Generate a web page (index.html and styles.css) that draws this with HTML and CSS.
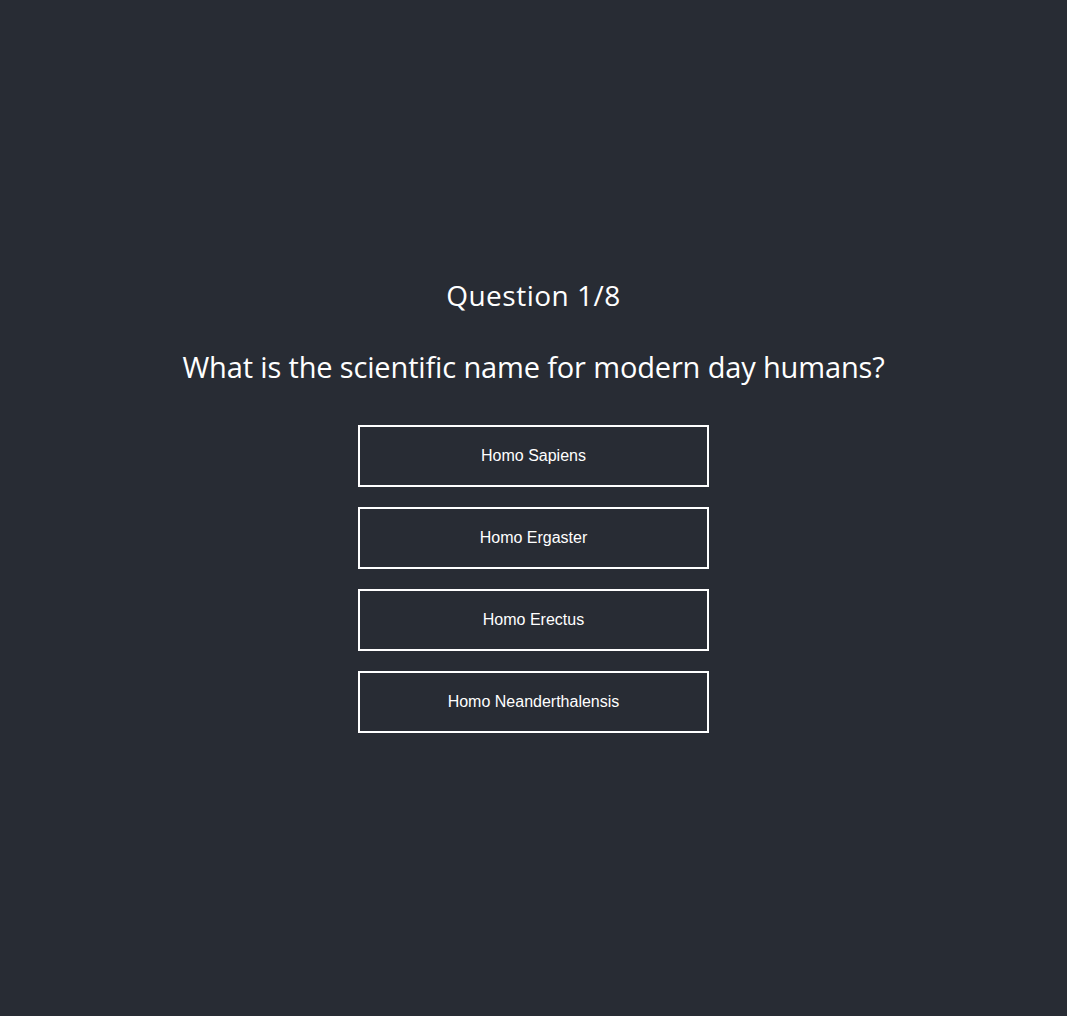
FILE: index.html
```html
<!DOCTYPE html>
<html lang="en">
<head>
<meta charset="utf-8">
<title>Quiz</title>
<link rel="stylesheet" href="styles.css">
</head>
<body>
<main class="app">
  <div class="quiz">
    <h2 class="count">Question 1/8</h2>
    <p class="question">What is the scientific name for modern day humans?</p>
    <div class="answers">
      <button class="answer">Homo Sapiens</button>
      <button class="answer">Homo Ergaster</button>
      <button class="answer">Homo Erectus</button>
      <button class="answer">Homo Neanderthalensis</button>
    </div>
  </div>
</main>
</body>
</html>
```
FILE: styles.css
```css
html, body {
  margin: 0;
  padding: 0;
  background: #282c34;
}
.app {
  box-sizing: border-box;
  min-height: 100vh;
  padding-bottom: 6px;
  display: flex;
  flex-direction: column;
  justify-content: center;
  align-items: center;
  color: #ffffff;
  font-family: "Open Sans", "Noto Sans", sans-serif;
}
.quiz {
  display: flex;
  flex-direction: column;
  align-items: center;
}
.count {
  margin: 0;
  font-size: 28px;
  font-weight: 400;
  line-height: 36px;
  letter-spacing: 0.5px;
}
.question {
  margin: 35px 0 0;
  font-size: 29px;
  line-height: 38px;
  letter-spacing: -0.15px;
}
.answers {
  margin-top: 39px;
  display: flex;
  flex-direction: column;
  gap: 20px;
}
.answer {
  width: 351px;
  height: 62px;
  background: transparent;
  border: 2px solid #ffffff;
  color: #ffffff;
  font-family: "Liberation Sans", Arial, sans-serif;
  font-size: 16px;
  padding: 0;
  cursor: pointer;
}
```
